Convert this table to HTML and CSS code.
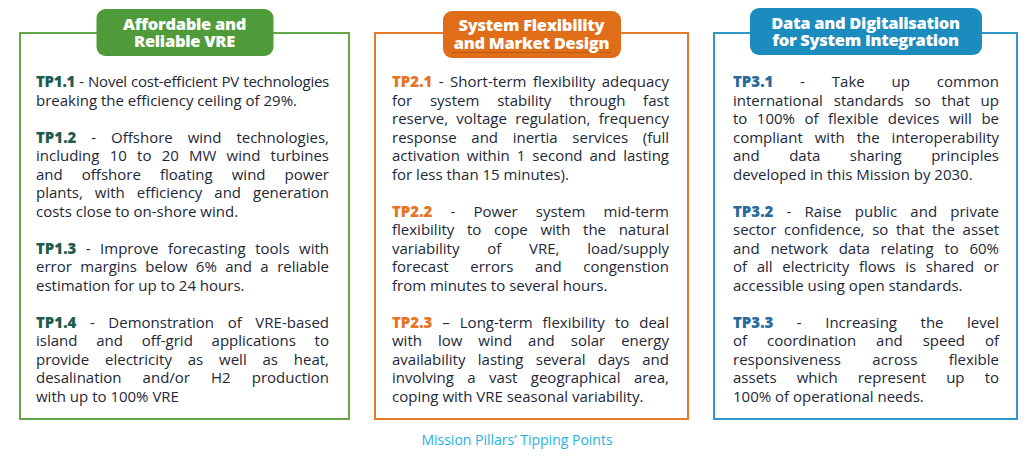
FILE: index.html
```html
<!DOCTYPE html>
<html lang="en">
<head>
<meta charset="utf-8">
<title>Mission Pillars' Tipping Points</title>
<link rel="stylesheet" href="styles.css">
</head>
<body>
<div class="page">
  <div class="cards">
    <section class="card card-green">
      <div class="badge badge-green"><span class="badge-text">Affordable and<br>Reliable VRE</span></div>
      <p class="tp"><span class="ln tight"><b class="lbl">TP1.1</b> - Novel cost-efficient PV technologies</span><span class="ln">breaking the efficiency ceiling of 29%.</span></p>
      <p class="tp"><span class="ln"><b class="lbl">TP1.2</b> - Offshore wind technologies,</span><span class="ln">including 10 to 20 MW wind turbines</span><span class="ln">and offshore floating wind power</span><span class="ln">plants, with efficiency and generation</span><span class="ln">costs close to on-shore wind.</span></p>
      <p class="tp"><span class="ln"><b class="lbl">TP1.3</b> - Improve forecasting tools with</span><span class="ln">error margins below 6% and a reliable</span><span class="ln">estimation for up to 24 hours.</span></p>
      <p class="tp"><span class="ln"><b class="lbl">TP1.4</b> - Demonstration of VRE-based</span><span class="ln">island and off-grid applications to</span><span class="ln">provide electricity as well as heat,</span><span class="ln">desalination and/or H2 production</span><span class="ln">with up to 100% VRE</span></p>
    </section>
    <section class="card card-orange">
      <div class="badge badge-orange"><span class="badge-text">System Flexibility<br>and Market Design</span></div>
      <p class="tp"><span class="ln"><b class="lbl">TP2.1</b> - Short-term flexibility adequacy</span><span class="ln">for system stability through fast</span><span class="ln">reserve, voltage regulation, frequency</span><span class="ln">response and inertia services (full</span><span class="ln">activation within 1 second and lasting</span><span class="ln">for less than 15 minutes).</span></p>
      <p class="tp"><span class="ln"><b class="lbl">TP2.2</b> - Power system mid-term</span><span class="ln">flexibility to cope with the natural</span><span class="ln">variability of VRE, load/supply</span><span class="ln">forecast errors and congenstion</span><span class="ln">from minutes to several hours.</span></p>
      <p class="tp"><span class="ln"><b class="lbl">TP2.3</b> – Long-term flexibility to deal</span><span class="ln">with low wind and solar energy</span><span class="ln">availability lasting several days and</span><span class="ln">involving a vast geographical area,</span><span class="ln">coping with VRE seasonal variability.</span></p>
    </section>
    <section class="card card-blue">
      <div class="badge badge-blue"><span class="badge-text">Data and Digitalisation<br>for System Integration</span></div>
      <p class="tp"><span class="ln"><b class="lbl">TP3.1</b> - Take up common</span><span class="ln">international standards so that up</span><span class="ln">to 100% of flexible devices will be</span><span class="ln">compliant with the interoperability</span><span class="ln">and data sharing principles</span><span class="ln">developed in this Mission by 2030.</span></p>
      <p class="tp"><span class="ln"><b class="lbl">TP3.2</b> - Raise public and private</span><span class="ln">sector confidence, so that the asset</span><span class="ln">and network data relating to 60%</span><span class="ln">of all electricity flows is shared or</span><span class="ln">accessible using open standards.</span></p>
      <p class="tp"><span class="ln"><b class="lbl">TP3.3</b> - Increasing the level</span><span class="ln">of coordination and speed of</span><span class="ln">responsiveness across flexible</span><span class="ln">assets which represent up to</span><span class="ln">100% of operational needs.</span></p>
    </section>
  </div>
  <p class="caption">Mission Pillars’ Tipping Points</p>
</div>
</body>
</html>
```
FILE: styles.css
```css
* { box-sizing: border-box; }

html, body {
  margin: 0;
  padding: 0;
  background: #ffffff;
}

body {
  font-family: "Open Sans", "Noto Sans", "DejaVu Sans", sans-serif;
  color: #1d2838;
}

.page {
  width: 1024px;
  height: 459px;
  padding-top: 32px;
}

.cards {
  display: grid;
  grid-template-columns: 331px 315px 305px;
  column-gap: 24px;
  margin-left: 19px;
}

.card {
  position: relative;
  height: 388px;
  border: 2px solid #62a847;
  padding-top: 38px;
}

.card-green { border-color: #63a748; padding-left: 15px; padding-right: 19px; }
.card-orange { border-color: #e8782a; padding-left: 16px; padding-right: 18px; }
.card-blue { border-color: #3097c6; padding-left: 18px; padding-right: 17px; }

.badge {
  position: absolute;
  left: 50%;
  transform: translateX(-50%);
  height: 47px;
  border-radius: 9px;
  display: flex;
  align-items: center;
  justify-content: center;
  color: #ffffff;
  font-weight: 800;
  font-size: 16.5px;
  line-height: 17.5px;
  text-align: center;
  letter-spacing: -0.3px;
}

.badge-text {
  display: block;
  padding-bottom: 1px;
}

.badge-green { background: #4f9b3a; width: 177px; top: -25px; }
.badge-orange { background: #e06d18; width: 178px; top: -23px; }
.badge-orange .badge-text { border-bottom: 1px solid rgba(120, 50, 0, 0.35); padding: 0 2px 1px; }
.badge-blue { background: #1c8bbd; width: 232px; top: -26px; }

.tp {
  margin: 0 0 18.5px;
  font-size: 15px;
  font-weight: 500;
  line-height: 18.5px;
}

.ln {
  display: block;
  white-space: nowrap;
  text-align: justify;
  text-align-last: justify;
}

.ln.tight { letter-spacing: -0.25px; }

.ln:last-child {
  text-align-last: left;
}

.lbl { font-weight: 800; }
.card-green .lbl { color: #1f5c4e; }
.card-orange .lbl { color: #e5731f; }
.card-blue .lbl { color: #286a9c; }

.caption {
  margin: 10px 0 0;
  text-align: center;
  font-size: 14px;
  line-height: 20px;
  color: #1eb2e6;
  padding-left: 10px;
}
```
